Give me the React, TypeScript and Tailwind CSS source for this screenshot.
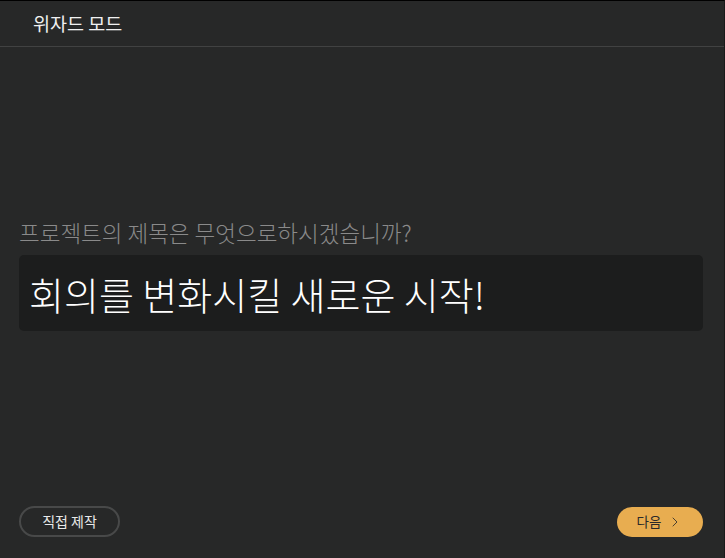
import { ChevronRight } from "lucide-react";

export default function App() {
  return (
    <div
      className="w-[725px] h-[558px] flex flex-col bg-[#272828] border-t border-t-black border-r border-r-[#1a1a1a] text-white"
      style={{ fontFamily: '"Noto Sans CJK KR", "Noto Sans", sans-serif' }}
    >
      {/* Header */}
      <header className="h-[46px] shrink-0 flex items-center px-[33px] border-b border-[#414242]">
        <h1 className="text-[18.5px] text-[#f0f0f0]">위자드 모드</h1>
      </header>

      {/* Body */}
      <main className="flex-1 flex flex-col pl-[19px] pr-[21px] pt-[170px]">
        <p className="text-[22.5px] leading-[30px] text-[#8a8a8a] font-light">
          프로젝트의 제목은 무엇으로하시겠습니까?
        </p>
        <div className="mt-[8px] h-[76px] rounded-[5px] bg-[#1c1d1d] flex items-center px-[10px]">
          <span className="text-[38px] text-white font-light">회의를 변화시킬 새로운 시작!</span>
        </div>
      </main>

      {/* Footer */}
      <footer className="flex items-center justify-between pl-[19px] pr-[21px] pb-[21px]">
        <button className="h-[31px] w-[101px] rounded-full border-2 border-[#484949] text-[14px] text-[#e8e8e8]">
          직접 제작
        </button>
        <button className="h-[30px] w-[86px] rounded-full bg-[#e8ad50] text-[13.5px] text-[#2a2a2a] flex items-center justify-center gap-[6px]">
          <span>다음</span>
          <ChevronRight className="w-[16px] h-[16px]" strokeWidth={1.25} />
        </button>
      </footer>
    </div>
  );
}
